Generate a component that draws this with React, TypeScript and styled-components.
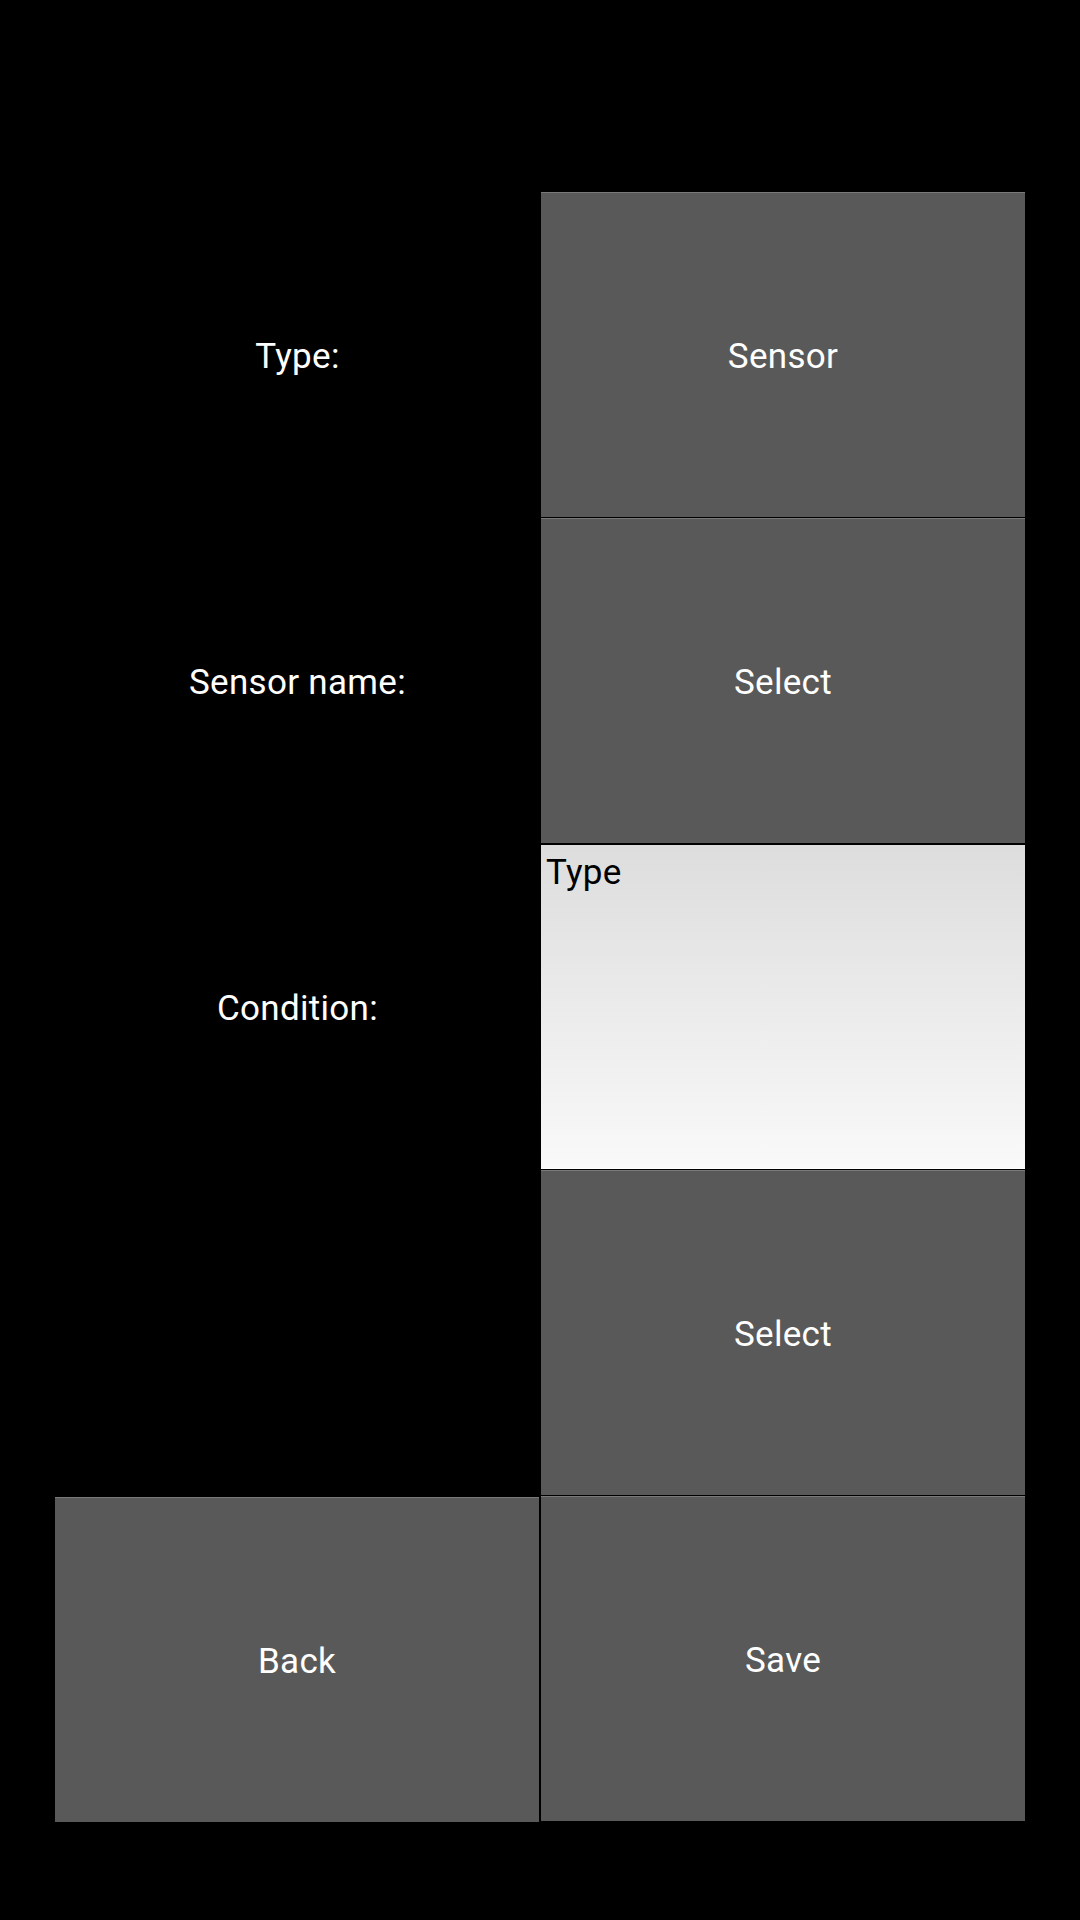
import React from 'react';
import styled, { createGlobalStyle } from 'styled-components';

const GlobalStyle = createGlobalStyle`
  html, body {
    margin: 0;
    padding: 0;
    background: #000;
  }
  body {
    font-family: Roboto, "Noto Sans", sans-serif;
  }
`;

const Screen = styled.div`
  width: 1080px;
  height: 1920px;
  background: #000;
  padding: 192px 55px 0 55px;
  box-sizing: border-box;
`;

const Form = styled.div`
  display: grid;
  grid-template-columns: 485px 485px;
  grid-template-rows: repeat(5, 326px);
`;

const Label = styled.div<{ $row: number }>`
  grid-column: 1;
  grid-row: ${(p) => p.$row};
  display: flex;
  align-items: center;
  justify-content: center;
  padding-top: 2px;
  color: #fff;
  font-size: 35px;
  letter-spacing: 0.3px;
`;

const Button = styled.div<{ $row: number; $col: number }>`
  grid-column: ${(p) => p.$col};
  grid-row: ${(p) => p.$row};
  margin: ${(p) => (p.$col === 1 ? '1px 1px 0 0' : '0 0 1px 1px')};
  display: flex;
  align-items: center;
  justify-content: center;
  padding-top: 2px;
  background: #595959;
  border-top: 1px solid #7a7a7a;
  color: #fff;
  font-size: 35px;
  letter-spacing: 0.3px;
`;

const EditText = styled.div<{ $row: number }>`
  grid-column: 2;
  grid-row: ${(p) => p.$row};
  margin: 1px 0 1px 1px;
  background: linear-gradient(#dddddd, #f9f9f9);
  border-bottom: 1px solid #fff;
  color: #000;
  font-size: 35px;
  letter-spacing: 0.3px;
  padding: 7px 0 0 5px;
`;

const App = () => {
  return (
    <Screen>
      <GlobalStyle />
      <Form>
        <Label $row={1}>Type:</Label>
        <Button $row={1} $col={2}>Sensor</Button>
        <Label $row={2}>Sensor name:</Label>
        <Button $row={2} $col={2}>Select</Button>
        <Label $row={3}>Condition:</Label>
        <EditText $row={3}>Type</EditText>
        <Button $row={4} $col={2}>Select</Button>
        <Button $row={5} $col={1}>Back</Button>
        <Button $row={5} $col={2}>Save</Button>
      </Form>
    </Screen>
  );
};

export default App;
